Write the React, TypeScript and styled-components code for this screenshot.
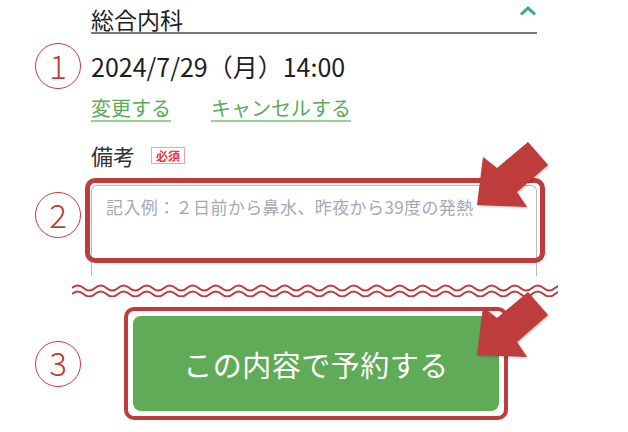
import React from 'react';
import styled, { createGlobalStyle } from 'styled-components';

const RED = '#bf3c3c';
const GREEN = '#5fab57';

const GlobalStyle = createGlobalStyle`
    html, body {
        margin: 0;
        padding: 0;
        background: #ffffff;
    }
    * {
        box-sizing: border-box;
    }
`;

const Page = styled.div`
    position: relative;
    width: 628px;
    height: 432px;
    overflow: hidden;
    display: flex;
    flex-direction: column;
    padding-right: 91px;
    background: #ffffff;
    font-family: 'Noto Sans CJK JP', 'Noto Sans', sans-serif;
    color: #222222;
`;

const Row = styled.div<{ $mt: number }>`
    display: flex;
    align-items: center;
    margin-top: ${(props) => props.$mt}px;
`;

const Gutter = styled.div<{ $top?: number }>`
    width: 91px;
    flex: none;
    display: flex;
    padding-left: 35px;
    align-self: ${(props) => (props.$top !== undefined ? 'flex-start' : 'center')};
    margin-top: ${(props) => props.$top ?? 0}px;
`;

const Marker = styled.div`
    width: 46px;
    height: 46px;
    border: 1.5px solid ${RED};
    border-radius: 50%;
    display: flex;
    align-items: center;
    justify-content: center;
    color: ${RED};
    font-size: 33px;
    font-weight: 300;
    line-height: 1;
    padding-bottom: 2px;
`;

const Content = styled.div`
    flex: 1;
    min-width: 0;
`;

const Header = styled.div`
    margin-left: 91px;
    display: flex;
    justify-content: space-between;
    padding-top: 6px;
    border-bottom: 2px solid #777777;
`;

const DeptName = styled.div`
    font-size: 23px;
    line-height: 26px;
    color: #1e1e1e;
`;

const Chevron = styled.svg`
    width: 18px;
    height: 11px;
    margin-top: -1px;
`;

const DateText = styled.div`
    font-size: 25px;
    line-height: 32px;
    color: #1e1e1e;
`;

const LinkRow = styled.div`
    display: flex;
    gap: 40px;
`;

const TextLink = styled.a`
    font-size: 20px;
    line-height: 24px;
    color: #5aab5a;
    text-decoration: underline;
    text-decoration-color: #98cf96;
    text-decoration-thickness: 1.5px;
    text-underline-offset: 4px;
    cursor: pointer;
`;

const LabelRow = styled.div`
    display: flex;
    align-items: center;
`;

const Label = styled.span`
    font-size: 22px;
    line-height: 28px;
    color: #333333;
`;

const RequiredTag = styled.span`
    margin-left: 16px;
    height: 17px;
    padding: 0 4px;
    border: 1px solid #f3a3a3;
    color: #e8383d;
    font-size: 12px;
    font-weight: 700;
    line-height: 15px;
`;

const FieldWrap = styled.div`
    position: relative;
    height: 91px;
`;

const Textarea = styled.textarea`
    display: block;
    width: 100%;
    height: 91px;
    padding: 8px 14px;
    border: 1px solid #b4b8c4;
    border-bottom: none;
    border-radius: 6px 6px 0 0;
    font-family: 'Noto Sans CJK JP', 'Noto Sans', sans-serif;
    font-size: 17px;
    letter-spacing: 0.4px;
    line-height: 25px;
    color: #333333;
    resize: none;
    outline: none;
    background: #ffffff;
    &::placeholder {
        color: #a4a8b4;
    }
`;

const FieldHighlight = styled.div`
    position: absolute;
    left: -6px;
    top: -7px;
    width: 460px;
    height: 85px;
    border: 5px solid ${RED};
    border-radius: 10px;
    pointer-events: none;
`;

const Wave = styled.svg`
    display: block;
    margin-top: 5px;
    margin-left: 72px;
    width: 486px;
    height: 16px;
`;

const ButtonFrame = styled.div`
    margin-left: 33px;
    width: 384px;
    padding: 5px;
    border: 4px solid ${RED};
    border-radius: 10px;
`;

const SubmitButton = styled.button`
    display: flex;
    align-items: center;
    justify-content: center;
    width: 100%;
    height: 95px;
    border: none;
    border-radius: 8px;
    background: ${GREEN};
    color: #ffffff;
    font-family: 'Noto Sans CJK JP', 'Noto Sans', sans-serif;
    font-size: 29px;
    letter-spacing: 0.5px;
    cursor: pointer;
`;

const Arrow = styled.svg<{ $top: number }>`
    position: absolute;
    left: 470px;
    top: ${(props) => props.$top}px;
    width: 84px;
    height: 76px;
    filter: drop-shadow(1px 1px 1px rgba(0, 0, 0, 0.25));
`;

// double wavy "omitted" line between the field and the button
const wavePath = (y: number) => {
    const period = 23;
    let d = `M0 ${y} q ${period / 4} -5 ${period / 2} 0`;
    for (let x = period / 2; x < 486; x += period / 2) {
        d += ` t ${period / 2} 0`;
    }
    return d;
};

const PointerArrow = ({ top }: { top: number }) => (
    <Arrow $top={top} viewBox="0 0 84 76">
        <polygon points="7,68 13,20 27,31 58,5 78,28 47,55 57,70" fill={RED} />
    </Arrow>
);

export default function App() {
    return (
        <>
            <GlobalStyle />
            <Page>
                <Header>
                    <DeptName>総合内科</DeptName>
                    <Chevron viewBox="0 0 18 11">
                        <polyline points="2,9.5 9,3 16,9.5" fill="none" stroke="#3aa78f" strokeWidth="3" />
                    </Chevron>
                </Header>

                <Row $mt={9}>
                    <Gutter>
                        <Marker>1</Marker>
                    </Gutter>
                    <Content>
                        <DateText>2024/7/29（月）14:00</DateText>
                    </Content>
                </Row>

                <Row $mt={7}>
                    <Gutter />
                    <Content>
                        <LinkRow>
                            <TextLink>変更する</TextLink>
                            <TextLink>キャンセルする</TextLink>
                        </LinkRow>
                    </Content>
                </Row>

                <Row $mt={21}>
                    <Gutter />
                    <Content>
                        <LabelRow>
                            <Label>備考</Label>
                            <RequiredTag>必須</RequiredTag>
                        </LabelRow>
                    </Content>
                </Row>

                <Row $mt={16}>
                    <Gutter $top={7}>
                        <Marker>2</Marker>
                    </Gutter>
                    <Content>
                        <FieldWrap>
                            <Textarea placeholder="記入例：２日前から鼻水、昨夜から39度の発熱" />
                            <FieldHighlight />
                        </FieldWrap>
                    </Content>
                </Row>

                <Wave viewBox="0 0 486 16">
                    <path d={wavePath(7)} fill="none" stroke={RED} strokeWidth="2" />
                    <path d={wavePath(13)} fill="none" stroke={RED} strokeWidth="2" />
                </Wave>

                <Row $mt={10}>
                    <Gutter>
                        <Marker>3</Marker>
                    </Gutter>
                    <Content>
                        <ButtonFrame>
                            <SubmitButton>この内容で予約する</SubmitButton>
                        </ButtonFrame>
                    </Content>
                </Row>

                <PointerArrow top={137} />
                <PointerArrow top={287} />
            </Page>
        </>
    );
}
